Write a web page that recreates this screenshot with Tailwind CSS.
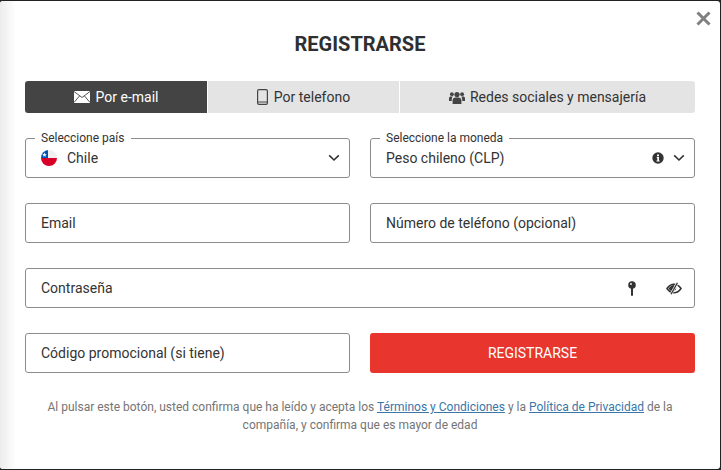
<!DOCTYPE html>
<html>
  <head>
    <meta charset="utf-8">
    <title>Registrarse</title>
    <script src="https://cdn.jsdelivr.net/npm/@tailwindcss/browser@4"></script>
  </head>
  <body class="w-[721px] h-[470px] overflow-hidden bg-[#222] font-['Roboto',sans-serif]">
    <div class="relative w-[720px] h-[468px] mt-px rounded-[3px] overflow-hidden bg-white px-[25px]">
      <div class="absolute left-0 top-0 w-[16px] h-full bg-gradient-to-r from-[#ececec] to-white"></div>

      <button class="absolute right-[9px] top-[10px] w-[15px] h-[15px]">
        <svg viewBox="0 0 15 15" class="w-[15px] h-[15px]"><path d="M1.500 1.500l12 12M13.500 1.500l-12 12" stroke="#808080" stroke-width="3" fill="none"/></svg>
      </button>

      <div class="relative">
        <h1 class="pt-[31px] text-center text-[20px] leading-[24px] font-bold text-[#2f2f2f]">REGISTRARSE</h1>

        <div class="flex mt-[25px] h-[32px] w-[670px] gap-px rounded-[3px] overflow-hidden text-[14px] text-[#333]">
          <div class="w-[182px] flex items-center justify-center gap-[6px] bg-[#444] text-white">
            <svg viewBox="0 0 16 12" class="w-[16px] h-[12px]"><path fill="#fff" d="M0 0h16v12H0z"/><path d="M0 .5l8 6 8-6M0 11.500l5.600-6.600M16 11.500l-5.600-6.600" stroke="#444" stroke-width=".9" fill="none"/></svg>
            <span>Por e-mail</span>
          </div>
          <div class="w-[191px] flex items-center justify-center gap-[6px] bg-[#e4e4e4]">
            <svg viewBox="0 0 11 16" class="w-[11px] h-[16px]"><rect x=".6" y=".6" width="9.800" height="14.800" rx="1.400" fill="none" stroke="#444" stroke-width="1.200"/><path d="M1 13h9" stroke="#444"/></svg>
            <span>Por telefono</span>
          </div>
          <div class="flex-1 flex items-center justify-center gap-[5px] bg-[#e4e4e4]">
            <svg viewBox="0 0 16 13" class="w-[16px] h-[13px]" fill="#444"><circle cx="8" cy="3.600" r="2.600"/><path d="M3.600 13V9.400C3.600 7.600 5 6.600 6.400 6.600h3.200c1.400 0 2.800 1 2.800 2.800V13z"/><circle cx="2.900" cy="3.200" r="1.900"/><circle cx="13.100" cy="3.200" r="1.900"/><path d="M0 10V7.200C0 6 .9 5.400 1.800 5.400h2C3 6.400 2.700 7.400 2.700 10zM16 10V7.200C16 6 15.100 5.400 14.200 5.400h-2c.8 1 1.100 2 1.100 4.600z"/></svg>
            <span>Redes sociales y mensajería</span>
          </div>
        </div>

        <div class="grid grid-cols-2 gap-x-[20px] gap-y-[25px] mt-[25px] w-[670px] text-[14px] text-[#333]">
          <div class="relative flex items-center h-[40px] pl-[15px] pr-[9px] border border-[#8c8c8c] rounded-[3px]">
            <span class="absolute left-[9px] -top-[8px] px-[6px] bg-white text-[12px] leading-[14px]">Seleccione país</span>
            <svg viewBox="0 0 16 16" class="w-[16px] h-[16px] mr-[10px]">
              <defs><clipPath id="flag"><circle cx="8" cy="8" r="8"/></clipPath></defs>
              <g clip-path="url(#flag)"><path fill="#f0f0f0" d="M0 0h16v8H0z"/><path fill="#d80027" d="M0 8h16v8H0z"/><path fill="#0052b4" d="M0 0h7v8H0z"/><path fill="#f0f0f0" d="M3.500 2.600l.7 1.500 1.500.2-1.100 1 .3 1.500-1.400-.8-1.400.8.3-1.500-1.100-1 1.500-.2z"/></g>
            </svg>
            <span class="flex-1">Chile</span>
            <svg viewBox="0 0 12 8" class="w-[12px] h-[8px]"><path d="M1.200 1.400L6 6l4.800-4.600" fill="none" stroke="#333" stroke-width="1.600"/></svg>
          </div>

          <div class="relative flex items-center h-[40px] pl-[15px] pr-[9px] border border-[#8c8c8c] rounded-[3px]">
            <span class="absolute left-[9px] -top-[8px] px-[6px] bg-white text-[12px] leading-[14px]">Seleccione la moneda</span>
            <span class="flex-1">Peso chileno (CLP)</span>
            <svg viewBox="0 0 12 12" class="w-[12px] h-[12px] mr-[9px]"><circle cx="6" cy="6" r="5.700" fill="#333"/><path d="M5 2.400h2v1.800H5zM4.700 5h2.300v3.600h.6v1H4.500v-1h.8V6h-.6z" fill="#fff"/></svg>
            <svg viewBox="0 0 12 8" class="w-[12px] h-[8px]"><path d="M1.200 1.400L6 6l4.800-4.600" fill="none" stroke="#333" stroke-width="1.600"/></svg>
          </div>

          <div class="flex items-center h-[40px] px-[15px] border border-[#8c8c8c] rounded-[3px]">Email</div>
          <div class="flex items-center h-[40px] px-[15px] border border-[#8c8c8c] rounded-[3px]">Número de teléfono (opcional)</div>

          <div class="col-span-2 flex items-center h-[40px] pl-[15px] pr-[12px] border border-[#8c8c8c] rounded-[3px]">
            <span class="flex-1">Contraseña</span>
            <svg viewBox="0 0 8 15" class="w-[8px] h-[15px] mr-[30px]"><circle cx="4" cy="4" r="3.800" fill="#333"/><circle cx="3" cy="3" r=".9" fill="#fff"/><path d="M3 6h2v8.400l-1 .6-1-.6z" fill="#333"/></svg>
            <svg viewBox="0 0 16 13" class="w-[16px] h-[13px]"><path d="M1 6.500C3 3.600 5.300 2.300 8 2.300s5 1.300 7 4.200c-2 2.900-4.300 4.200-7 4.200S3 9.400 1 6.500z" fill="none" stroke="#333" stroke-width="1.500"/><path d="M2.500 6.500C4 4.600 5.500 3.300 8 3.300L5.500 9.600C4.400 9 3.400 7.900 2.500 6.500z" fill="#333"/><circle cx="7.500" cy="6" r="2.700" fill="#333"/><path d="M11.500.8L5 12.200" stroke="#fff" stroke-width="2.600"/><path d="M11.500.8L5 12.200" stroke="#333" stroke-width="1.300"/></svg>
          </div>

          <div class="flex items-center h-[40px] px-[15px] border border-[#8c8c8c] rounded-[3px]">Código promocional (si tiene)</div>
          <button class="h-[40px] rounded-[3px] bg-[#e8352d] text-white text-[14px]">REGISTRARSE</button>
        </div>

        <p class="mt-[25px] w-[670px] text-center text-[12px] leading-[18px] text-[#757575]">
          Al pulsar este botón, usted confirma que ha leído y acepta los <a href="#" class="underline text-[#3a76a8]">Términos y Condiciones</a> y la <a href="#" class="underline text-[#3a76a8]">Política de Privacidad</a> de la compañía, y confirma que es mayor de edad
        </p>
      </div>
    </div>
  </body>
</html>
